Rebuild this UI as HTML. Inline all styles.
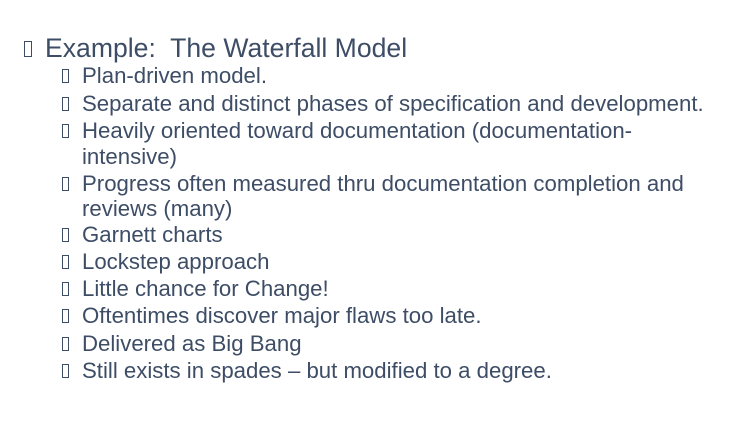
<!DOCTYPE html>
<html><head><meta charset="utf-8"><style>
html,body{margin:0;padding:0;background:#fff;width:744px;height:424px;overflow:hidden}
body{position:relative;font-family:"Liberation Sans",Arial,sans-serif;color:#3e4d66}
.l{position:absolute;white-space:nowrap;font-size:22.2px;line-height:26px;left:82px}
.b{position:absolute;width:5px;height:12px;border:1px solid #3e4d66;left:62px}
.t{font-size:26.6px;left:45px;line-height:30px}
</style></head><body>
<div class="b" style="left:24px;top:41px;width:6px;height:14px"></div>
<div class="l t" style="top:33px">Example:&nbsp; The Waterfall Model</div>

<div class="b" style="top:69px"></div><div class="l" style="top:63px">Plan-driven model.</div>
<div class="b" style="top:97px"></div><div class="l" style="top:91px">Separate and distinct phases of specification and development.</div>
<div class="b" style="top:124px"></div><div class="l" style="top:118px">Heavily oriented toward documentation (documentation-</div>
<div class="l" style="top:144px">intensive)</div>
<div class="b" style="top:177px"></div><div class="l" style="top:171px">Progress often measured thru documentation completion and</div>
<div class="l" style="top:196px">reviews (many)</div>
<div class="b" style="top:228px"></div><div class="l" style="top:222px">Garnett charts</div>
<div class="b" style="top:255px"></div><div class="l" style="top:249px">Lockstep approach</div>
<div class="b" style="top:282px"></div><div class="l" style="top:276px">Little chance for Change!</div>
<div class="b" style="top:309px"></div><div class="l" style="top:303px">Oftentimes discover major flaws too late.</div>
<div class="b" style="top:337px"></div><div class="l" style="top:331px">Delivered as Big Bang</div>
<div class="b" style="top:364px"></div><div class="l" style="top:358px">Still exists in spades – but modified to a degree.</div>
</body></html>
